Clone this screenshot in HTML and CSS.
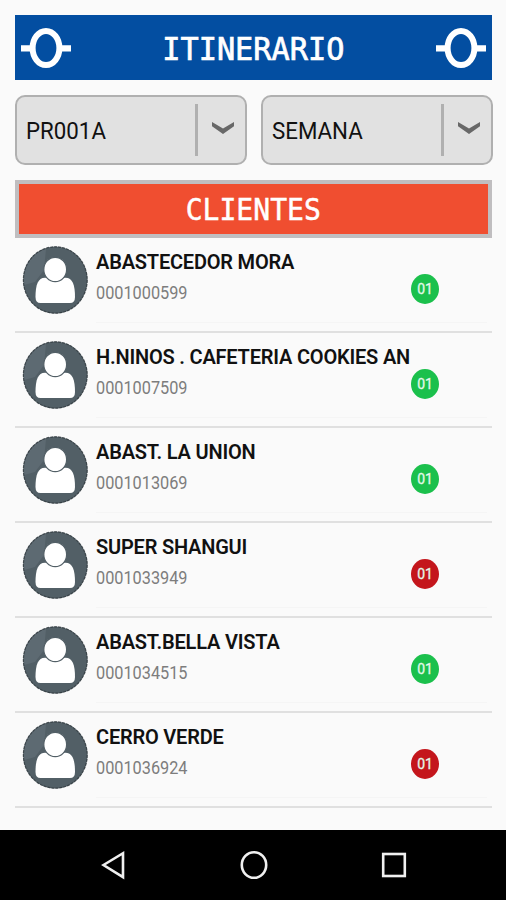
FILE: index.html
```
<!DOCTYPE html>
<html lang="es">
<head>
  <meta charset="UTF-8" />
  <title>Itinerario</title>
  <link rel="stylesheet" href="styles.css">
</head>
<body>

<svg class="defs" width="0" height="0">
  <symbol id="node" viewBox="0 0 50 42">
    <path d="M0 18.2H11V24.6H0zM39 18.2H50V24.6H39z" fill="#fff"/>
    <ellipse cx="25" cy="21" rx="13.4" ry="17" fill="none" stroke="#fff" stroke-width="6"/>
  </symbol>
  <symbol id="arrow" viewBox="0 0 24 14">
    <path d="M1 1L12 7.4L23 1V5.2L12 13L1 5.200z" fill="#686868"/>
  </symbol>
  <symbol id="avatar" viewBox="0 0 66 68">
    <ellipse cx="33.300" cy="34" rx="32.2" ry="33.5" fill="#525f66"/>
    <path d="M2 25Q7 8 24 3L22 24L13 36L2 39z" fill="#66727a" opacity=".6"/>
    <ellipse cx="33.300" cy="34" rx="31.900" ry="33.2" fill="none" stroke="#2f383d" stroke-width="1.2" stroke-dasharray="3 1" stroke-opacity=".8"/>
    <path d="M13.500 51C13.500 39 16 31.800 23 31.800H43.500C50.500 31.800 53 39 53 51Q53 57 48 57H18.500Q13.500 57 13.500 51z" fill="#fff"/>
    <ellipse cx="33.200" cy="23.500" rx="11.400" ry="12.200" fill="#fff" stroke="#525f66" stroke-width="1.200"/>
  </symbol>
</svg>

<div class="screen">
  <header class="title-bar">
    <svg class="node"><use href="#node"/></svg>
    <h1 class="title">ITINERARIO</h1>
    <svg class="node"><use href="#node"/></svg>
  </header>

  <div class="filters">
    <div class="spinner">
      <span class="spinner-text">PR001A</span>
      <span class="spinner-line"></span>
      <svg class="arrow"><use href="#arrow"/></svg>
    </div>
    <div class="spinner">
      <span class="spinner-text">SEMANA</span>
      <span class="spinner-line"></span>
      <svg class="arrow"><use href="#arrow"/></svg>
    </div>
  </div>

  <h2 class="section"><span class="section-text">CLIENTES</span></h2>

  <ul class="clients">
    <li class="client">
      <svg class="avatar"><use href="#avatar"/></svg>
      <div class="info">
        <span class="name">ABASTECEDOR MORA</span>
        <span class="code">0001000599</span>
        <span class="badge green">01</span>
      </div>
    </li>
    <li class="client">
      <svg class="avatar"><use href="#avatar"/></svg>
      <div class="info">
        <span class="name">H.NINOS . CAFETERIA COOKIES AN</span>
        <span class="code">0001007509</span>
        <span class="badge green">01</span>
      </div>
    </li>
    <li class="client">
      <svg class="avatar"><use href="#avatar"/></svg>
      <div class="info">
        <span class="name">ABAST. LA UNION</span>
        <span class="code">0001013069</span>
        <span class="badge green">01</span>
      </div>
    </li>
    <li class="client">
      <svg class="avatar"><use href="#avatar"/></svg>
      <div class="info">
        <span class="name">SUPER SHANGUI</span>
        <span class="code">0001033949</span>
        <span class="badge red">01</span>
      </div>
    </li>
    <li class="client">
      <svg class="avatar"><use href="#avatar"/></svg>
      <div class="info">
        <span class="name">ABAST.BELLA VISTA</span>
        <span class="code">0001034515</span>
        <span class="badge green">01</span>
      </div>
    </li>
    <li class="client">
      <svg class="avatar"><use href="#avatar"/></svg>
      <div class="info">
        <span class="name">CERRO VERDE</span>
        <span class="code">0001036924</span>
        <span class="badge red">01</span>
      </div>
    </li>
  </ul>
</div>

<nav class="nav-bar">
  <svg width="28" height="32" viewBox="0 0 28 32"><path d="M3.500 16L23 4.200V28.200z"/></svg>
  <svg width="28" height="32" viewBox="0 0 28 32"><ellipse cx="14" cy="16" rx="12.200" ry="12.800"/></svg>
  <svg width="28" height="32" viewBox="0 0 28 32"><rect x="3.200" y="5" width="21.600" height="22"/></svg>
</nav>

</body>
</html>
```

FILE: styles.css
```
* {
  box-sizing: border-box;
}
body {
  margin: 0;
  width: 506px;
  height: 900px;
  display: flex;
  flex-direction: column;
  background: #fafafa;
  font-family: Roboto, sans-serif;
  overflow: hidden;
}
.defs {
  display: none;
}
.screen {
  flex: 1;
  padding: 15px 14px 0 15px;
}
.title-bar {
  display: flex;
  align-items: center;
  justify-content: space-between;
  height: 65px;
  padding: 1px 6px 0;
  background: #034ea1;
}
.node {
  width: 50px;
  height: 42px;
}
.title, .section {
  margin: 0;
  color: #fff;
  font-family: "DejaVu Sans Mono", monospace;
  font-weight: normal;
}
.title {
  font-size: 32px;
  line-height: 40px;
  padding-top: 1px;
  transform: scaleX(0.945);
  -webkit-text-stroke: 0.7px #fff;
}
.filters {
  display: grid;
  grid-template-columns: 232px 232px;
  gap: 14px;
  margin-top: 15px;
}
.spinner {
  display: flex;
  align-items: center;
  height: 70px;
  padding: 0 10px 0 9px;
  background: #e1e1e1;
  border: 2px solid #b0b0b0;
  border-radius: 10px;
}
.spinner-text {
  flex: 1;
  color: #111;
  font-size: 22.3px;
  line-height: 28px;
  transform: scaleY(1.08);
}
.spinner-line {
  width: 3px;
  height: 52px;
  margin-right: 13px;
  background: #b0b0b0;
}
.arrow {
  width: 24px;
  height: 14px;
  margin-bottom: 5px;
}
.section {
  height: 58px;
  margin-top: 15px;
  border: 4px solid #c0bec0;
  background: #f04e30;
  font-size: 30px;
  line-height: 52px;
  text-align: center;
  -webkit-text-stroke: 0.5px #fff;
}
.section-text {
  display: inline-block;
  transform: scaleX(0.935);
}
.clients {
  margin: 0;
  padding: 0;
  list-style: none;
}
.client {
  display: flex;
  height: 95px;
  padding: 8px 5px 8px 7px;
  border-bottom: 2px solid #e0e0e0;
}
.avatar {
  flex: none;
  width: 66px;
  height: 68px;
}
.info {
  position: relative;
  flex: 1;
  display: flex;
  flex-direction: column;
  align-items: flex-start;
  margin-left: 8px;
  border-bottom: 1px solid #f5f5f5;
}
.name {
  color: #111;
  font-size: 20px;
  font-weight: 600;
  line-height: 32px;
  letter-spacing: -0.2px;
  white-space: nowrap;
}
.code {
  color: #7d7d7d;
  font-size: 16.3px;
  line-height: 24px;
  margin-top: 4px;
  transform: scaleY(1.1);
}
.badge {
  position: absolute;
  left: 315px;
  top: 28px;
  width: 28px;
  height: 30px;
  border-radius: 50%;
  color: #e4f8e9;
  font-size: 14px;
  line-height: 31px;
  text-align: center;
  -webkit-text-stroke: 0.3px #e4f8e9;
}
.green {
  background: #1bc04c;
}
.red {
  background: #c4161c;
}
.nav-bar {
  display: flex;
  justify-content: center;
  gap: 112px;
  align-items: center;
  height: 70px;
  padding-left: 1px;
  background: #000;
}
.nav-bar svg {
  fill: none;
  stroke: #f0f0f0;
  stroke-width: 2.6;
}
```
